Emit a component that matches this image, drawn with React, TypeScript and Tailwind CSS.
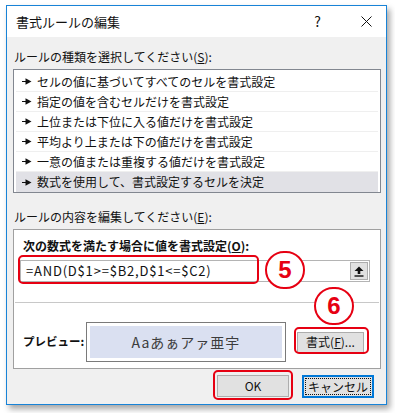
import React from "react";

const rules = [
  "セルの値に基づいてすべてのセルを書式設定",
  "指定の値を含むセルだけを書式設定",
  "上位または下位に入る値だけを書式設定",
  "平均より上または下の値だけを書式設定",
  "一意の値または重複する値だけを書式設定",
  "数式を使用して、書式設定するセルを決定",
];

const jp = "font-['Noto_Sans_CJK_JP','Noto_Sans',sans-serif]";

function Bullet() {
  return (
    <svg width="10" height="7" viewBox="0 0 10 7" className="shrink-0">
      <rect x="0" y="3" width="4" height="1" fill="#111" />
      <path d="M3.5 0.3 L9.5 3.5 L3.5 6.7 Z" fill="#111" />
    </svg>
  );
}

function Circle({ n }: { n: string }) {
  return (
    <div className="flex h-[38px] w-[40px] items-center justify-center rounded-full border-[2.5px] border-[#e60012] bg-white font-['Liberation_Sans',sans-serif] text-[24px] font-bold leading-none text-[#e60012]">
      {n}
    </div>
  );
}

export default function App() {
  return (
    <div className={`h-[413px] w-[395px] bg-white pl-[6px] pt-[5px] ${jp}`}>
      <div className="relative flex h-[400px] w-[381px] flex-col border border-[#1883d7] bg-[#f0f0f0] shadow-[3px_4px_6px_rgba(0,0,0,0.35)]">
        {/* タイトルバー */}
        <div className="flex h-[31px] shrink-0 items-center bg-white pl-[9px] text-[13px] text-[#111]">
          <span>書式ルールの編集</span>
          <span className="ml-auto mr-[40px] text-[14px]">?</span>
          <svg width="11" height="11" viewBox="0 0 11 11" className="mr-[14px]">
            <path d="M0.5 0.5 L10.5 10.5 M10.5 0.5 L0.5 10.5" stroke="#111" strokeWidth="1" />
          </svg>
        </div>

        {/* ルールの種類 */}
        <div className="mt-[12px] pl-[7px] text-[12px] leading-[16px] text-[#111]">
          ルールの種類を選択してください(<span className="underline">S</span>):
        </div>
        <div className="ml-[6px] mt-[4px] h-[124px] w-[368px] border border-[#828790] bg-white px-[2px] pt-[2px]">
          {rules.map((r, i) => (
            <div
              key={r}
              className={`flex h-[20px] items-center gap-[5px] pl-[6px] text-[12px] text-[#111] ${
                i === rules.length - 1 ? "bg-[#e1e1e6]" : "border-b border-[#efefef]"
              }`}
            >
              <Bullet />
              <span>{r}</span>
            </div>
          ))}
        </div>

        {/* ルールの内容 */}
        <div className="mt-[16px] pl-[7px] text-[12px] leading-[16px] text-[#111]">
          ルールの内容を編集してください(<span className="underline">E</span>):
        </div>
        <div className="ml-[6px] mt-[4px] w-[368px] border border-[#a0a0a0] bg-white pb-[6px] pt-[8px]">
          <div className="pl-[9px] text-[12px] font-bold leading-[16px] text-[#111]">
            次の数式を満たす場合に値を書式設定(<span className="underline">O</span>):
          </div>
          <div className="ml-[6px] mt-[6px] flex h-[22px] w-[350px] items-center border border-[#b4b4b4] bg-white pl-[5px] pr-[1px]">
            <span className="text-[13px] tracking-[0.8px] text-[#111]">=AND(D$1&gt;=$B2,D$1&lt;=$C2)</span>
            <div className="ml-auto flex h-[18px] w-[18px] items-center justify-center border border-[#adadad] bg-[#e1e1e1]">
              <svg width="10" height="11" viewBox="0 0 10 11">
                <path d="M5 0.5 L9.5 5 L6.3 5 L6.3 8 L3.7 8 L3.7 5 L0.5 5 Z" fill="#111" />
                <rect x="0.5" y="9.3" width="9" height="1.4" fill="#111" />
              </svg>
            </div>
          </div>
          <div className="mx-[1px] mt-[20px] h-px bg-[#c8c8c8]" />
          <div className="mt-[19px] flex items-center pl-[9px]">
            <span className="w-[63px] shrink-0 whitespace-nowrap text-[11.5px] font-bold text-[#111]">プレビュー:</span>
            <div className="flex h-[40px] w-[200px] border border-[#7a7a7a] bg-white p-[3px]">
              <div className="flex flex-1 items-center justify-center bg-[#dae0f1] text-[14px] tracking-[1px] text-[#3c3c3c]">
                Aaあぁアァ亜宇
              </div>
            </div>
            <div className="ml-[11px] flex h-[21px] w-[67px] items-center justify-center border border-[#adadad] bg-[#e1e1e1] text-[12px] text-[#111]">
              書式(<span className="underline">F</span>)...
            </div>
          </div>
        </div>

        {/* ボタン */}
        <div className="mt-[6px] flex justify-end gap-[13px] pr-[12px]">
          <div className="flex h-[22px] w-[72px] items-center justify-center border border-[#adadad] bg-[#e1e1e1] text-[12px] text-[#111]">
            OK
          </div>
          <div className="flex h-[23px] w-[72px] items-center justify-center border-2 border-[#0078d7] bg-[#e1e1e1] p-px text-[12px] text-[#111]">
            <div className="flex h-full w-full items-center justify-center border border-dotted border-[#111]">
              キャンセル
            </div>
          </div>
        </div>

        {/* 注釈 */}
        <div className="absolute left-[11px] top-[249px] h-[29px] w-[241px] rounded-[5px] border-[2.5px] border-[#e60012]" />
        <div className="absolute left-[258px] top-[245px]">
          <Circle n="5" />
        </div>
        <div className="absolute left-[307px] top-[281px]">
          <Circle n="6" />
        </div>
        <div className="absolute left-[287px] top-[321px] h-[27px] w-[75px] rounded-[5px] border-[2.5px] border-[#e60012]" />
        <div className="absolute left-[206px] top-[364px] h-[30px] w-[80px] rounded-[5px] border-[2.5px] border-[#e60012]" />
      </div>
    </div>
  );
}
